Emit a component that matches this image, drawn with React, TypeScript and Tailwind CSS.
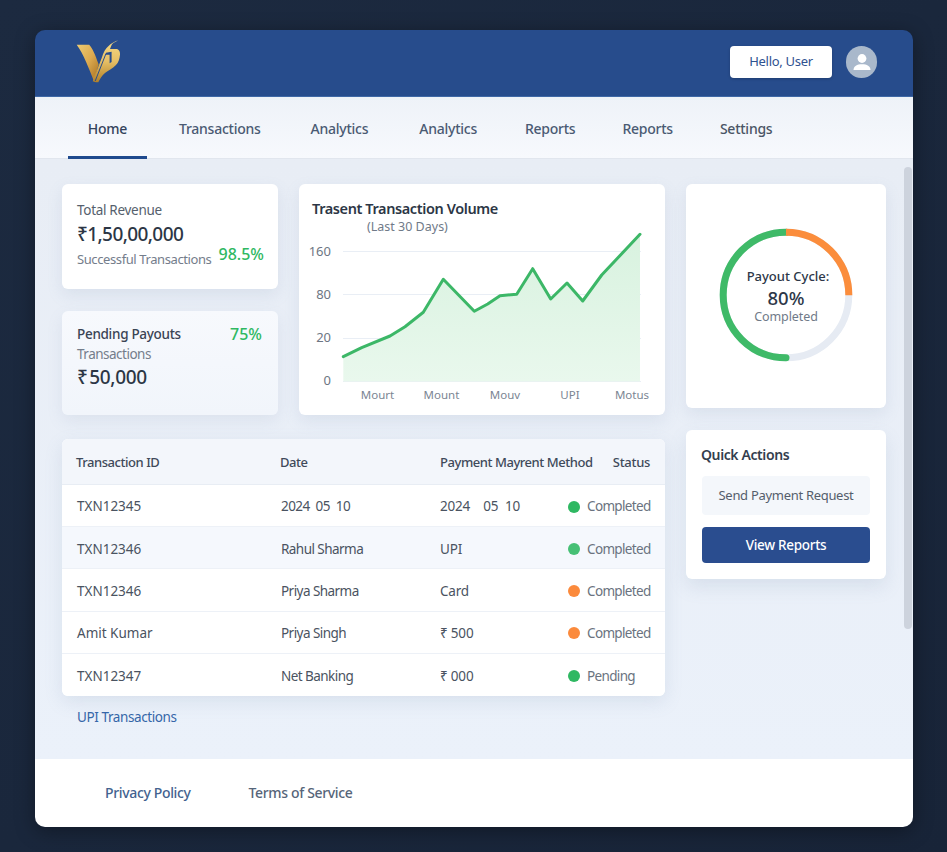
const font = { fontFamily: '"Noto Sans", "Open Sans", sans-serif' };

function Logo() {
  return (
    <svg width="50" height="46" viewBox="74 41 50 46" className="block" aria-hidden="true">
      <defs>
        <linearGradient id="gold" x1="0" y1="0" x2="1" y2="1">
          <stop offset="0" stopColor="#eecb72" />
          <stop offset="0.5" stopColor="#dcaa50" />
          <stop offset="0.8" stopColor="#bb8632" />
          <stop offset="1" stopColor="#c9994a" />
        </linearGradient>
        <linearGradient id="gold2" x1="0" y1="0" x2="0" y2="1">
          <stop offset="0" stopColor="#f4d984" />
          <stop offset="0.5" stopColor="#e6bf66" />
          <stop offset="1" stopColor="#b08029" />
        </linearGradient>
      </defs>
      <path d="M76.7 46.8H89.2C92.5 50 95.5 57.5 98.7 66.5L94 83.2C89 71 83.5 56 76.7 46.8Z" fill="url(#gold)" />
      <path d="M92.7 83.3L101.7 60C103.5 54 105.5 50.5 108.3 48.3C111 45.5 114.5 43.5 118.3 42.3C115 44 112.8 45.2 111.7 46.7L110 51H116C119 51 120.2 53.5 120 56.7C119.6 61 118.5 64.5 116 67C112.5 70.5 108 72.5 105 75C102 77.5 100 81 98.3 84.3L96 84.3Z" fill="url(#gold2)" />
      <path d="M95.2 83L106 55.5" stroke="#274c8c" strokeWidth="1" fill="none" />
      <path d="M106 54.8L111.6 53.8V64L109.6 65.2V56.8H105.6Z" fill="#274c8c" />
    </svg>
  );
}

function Chart() {
  const pts = "343.3,356.7 361.7,347.7 390,336 405,326.7 423.3,312.3 443.3,279.3 474.3,311.3 487.7,304 500,295.7 516.7,294.3 532.7,268.7 550.7,299 567,283 582.7,301 601.7,275 640,234.3";
  const labels = { fontSize: 11.5, fill: "#7b8593", fontFamily: '"Noto Sans", sans-serif' };
  const ticks = { fontSize: 13, fill: "#6d7683", fontFamily: '"Noto Sans", sans-serif' };
  return (
    <svg width="366" height="173" viewBox="299 242 366 173" className="block overflow-visible">
      <defs>
        <linearGradient id="area" x1="0" y1="0" x2="0" y2="1">
          <stop offset="0" stopColor="#d8f2df" />
          <stop offset="1" stopColor="#e9f8ed" />
        </linearGradient>
      </defs>
      {[251.5, 294.5, 338.5, 381.5].map((y) => (
        <line key={y} x1="343" x2="641" y1={y} y2={y} stroke="#e9eef5" strokeWidth="1" />
      ))}
      <polygon points={`343.3,381.5 ${pts} 640,381.5`} fill="url(#area)" />
      <polyline points={pts} fill="none" stroke="#3cb767" strokeWidth="3" strokeLinejoin="round" strokeLinecap="round" />
      <text x="331" y="256" textAnchor="end" {...ticks}>160</text>
      <text x="331" y="299" textAnchor="end" {...ticks}>80</text>
      <text x="331" y="342" textAnchor="end" {...ticks}>20</text>
      <text x="331" y="385" textAnchor="end" {...ticks}>0</text>
      <text x="377.5" y="398.5" textAnchor="middle" {...labels}>Mourt</text>
      <text x="441.5" y="398.5" textAnchor="middle" {...labels}>Mount</text>
      <text x="505" y="398.5" textAnchor="middle" {...labels}>Mouv</text>
      <text x="570" y="398.5" textAnchor="middle" {...labels}>UPI</text>
      <text x="632" y="398.5" textAnchor="middle" {...labels}>Motus</text>
    </svg>
  );
}

function Donut() {
  const r = 62.8;
  const c = 2 * Math.PI * r;
  return (
    <div className="relative w-[134px] h-[134px]">
      <svg width="134" height="134" viewBox="0 0 134 134" className="block -rotate-90">
        <circle cx="67" cy="67" r={r} fill="none" stroke="#e6ebf3" strokeWidth="7" />
        <circle cx="67" cy="67" r={r} fill="none" stroke="#3fba68" strokeWidth="7" strokeLinecap="round" strokeDasharray={`${c / 2} ${c}`} transform="rotate(180 67 67)" />
        <circle cx="67" cy="67" r={r} fill="none" stroke="#fb8d3c" strokeWidth="7" strokeDasharray={`${c / 4} ${c}`} />
      </svg>
      <div className="absolute inset-0 flex flex-col items-center justify-center pb-[1px]">
        <div className="ml-[4px] text-[13px] leading-[20px] font-medium text-[#2d3748]">Payout Cycle:</div>
        <div className="text-[18.5px] leading-[24px] font-medium text-[#2d3748]">80%</div>
        <div className="text-[12.5px] leading-[14px] tracking-[-0.1px] text-[#707a88]">Completed</div>
      </div>
    </div>
  );
}

const rows = [
  { a: "TXN12345", b: "2024  05  10", c: "2024    05  10", dot: "bg-[#2fb862]", s: "Completed", bg: "bg-white" },
  { a: "TXN12346", b: "Rahul Sharma", c: "UPI", dot: "bg-[#46c075]", s: "Completed", bg: "bg-[#f5f8fd]" },
  { a: "TXN12346", b: "Priya Sharma", c: "Card", dot: "bg-[#fb8a3c]", s: "Completed", bg: "bg-white" },
  { a: "Amit Kumar", b: "Priya Singh", c: "₹ 500", dot: "bg-[#fb8a3c]", s: "Completed", bg: "bg-white" },
  { a: "TXN12347", b: "Net Banking", c: "₹ 000", dot: "bg-[#2fb862]", s: "Pending", bg: "bg-white" },
];

const nav = [
  ["Transactions", "ml-[12px]"],
  ["Analytics", "ml-[10px]"],
  ["Analytics", "ml-[11px]"],
  ["Reports", "ml-[8px]"],
  ["Reports", "ml-[7px]"],
  ["Settings", "ml-[7px]"],
];

export default function App() {
  return (
    <div style={font} className="w-[947px] h-[852px] overflow-hidden bg-gradient-to-br from-[#1c2a40] to-[#182438] pt-[30px] pl-[35px]">
      <div className="relative w-[878px] h-[797px] rounded-[10px] overflow-hidden flex flex-col shadow-[0_4px_20px_rgba(0,0,0,0.35)]">
        <header className="h-[67px] shrink-0 bg-[#274c8c] border-b border-[#3f68a6] flex items-center pl-[39px] pr-[36px] pb-[2px]">
          <Logo />
          <div className="ml-auto flex items-center gap-[14px]">
            <div className="w-[102px] h-[32px] rounded-[4px] bg-white flex items-center justify-center text-[13px] tracking-[-0.3px] text-[#2f5290] shadow-[0_1px_3px_rgba(0,0,0,0.2)]">Hello, User</div>
            <div className="w-[31px] h-[32px] rounded-full bg-[#a9b8cb] flex items-center justify-center">
              <svg width="20" height="20" viewBox="0 0 20 20" aria-hidden="true">
                <circle cx="10" cy="6.5" r="4.4" fill="#fff" />
                <path d="M1.5 18C1.5 14 5 12.2 10 12.2C15 12.2 18.5 14 18.5 18Z" fill="#fff" />
              </svg>
            </div>
          </div>
        </header>
        <nav className="h-[62px] shrink-0 bg-gradient-to-b from-[#eef2f8] to-[#f7f9fd] border-b border-[#e1e6ee] flex pl-[33px] text-[14px] tracking-[-0.25px]">
          <div className="h-[62px] w-[79px] flex items-center justify-center font-medium text-[#34435c] border-b-[3px] border-[#1f4a8e] pt-[4px]">Home</div>
          {nav.map(([t, m], i) => (
            <div key={i} className={`px-5 h-[62px] flex items-center font-medium ${i === 5 ? "text-[#4a5566]" : "text-[#4a5a73]"} ${m}`}>{t}</div>
          ))}
        </nav>
        <main className="flex-1 min-h-0 bg-gradient-to-b from-[#e8edf5] to-[#ebf1fa] pl-[27px] pt-[25px] flex gap-[21px]">
          <div className="w-[603px]">
            <div className="flex gap-[21px]">
              <div className="w-[216px] flex flex-col gap-[22px]">
                <section className="h-[105px] rounded-[6px] bg-white shadow-[0_6px_16px_rgba(120,140,175,0.14)] pl-[15px] pr-[14px] pt-[16px]">
                  <div className="text-[13.5px] leading-[20px] tracking-[-0.3px] text-[#565f6d]">Total Revenue</div>
                  <div className="text-[19px] leading-[28px] tracking-[-0.6px] font-medium text-[#2c3645]">₹1,50,00,000</div>
                  <div className="flex items-start justify-between -mt-[6px] whitespace-nowrap">
                    <span className="mt-[7px] text-[13px] leading-[20px] tracking-[-0.4px] text-[#747d8b]">Successful Transactions</span>
                    <span className="text-[16px] leading-[24px] font-medium text-[#2fb862]">98.5%</span>
                  </div>
                </section>
                <section className="h-[104px] rounded-[6px] bg-gradient-to-b from-[#f7f9fd] to-[#f1f5fb] shadow-[0_6px_16px_rgba(120,140,175,0.12)] pl-[15px] pr-[16px] pt-[12px]">
                  <div className="flex justify-between items-center">
                    <span className="text-[13.5px] leading-[22px] tracking-[-0.3px] font-medium text-[#3a4454]">Pending Payouts</span>
                    <span className="text-[16px] leading-[22px] font-medium text-[#2fb862]">75%</span>
                  </div>
                  <div className="text-[13.5px] leading-[19px] tracking-[-0.5px] text-[#747d8b]">Transactions</div>
                  <div className="text-[19px] leading-[26px] tracking-[-0.3px] font-medium text-[#2c3645]">₹{"\u200a"}50,000</div>
                </section>
              </div>
              <section className="w-[366px] h-[231px] rounded-[6px] bg-white shadow-[0_6px_16px_rgba(120,140,175,0.14)]">
                <div className="h-[58px] pt-[14px] pl-[13px]">
                  <div className="text-[14.5px] leading-[20px] tracking-[-0.4px] font-semibold text-[#2c3645]">Trasent Transaction Volume</div>
                  <div className="pl-[55px] text-[12.5px] leading-[17px] text-[#707a88]">(Last 30 Days)</div>
                </div>
                <Chart />
              </section>
            </div>
            <section className="mt-[24px] rounded-[6px] overflow-hidden bg-white shadow-[0_6px_18px_rgba(120,140,175,0.16)]">
              <div className="h-[46px] flex items-center pl-[14px] pr-[15px] pt-[3px] bg-[#f3f6fb] border-b border-[#e8edf4] text-[13px] tracking-[-0.45px] text-[#3f4a5a] font-medium">
                <span className="w-[204px]">Transaction ID</span>
                <span className="w-[160px]">Date</span>
                <span>Payment Mayrent Method</span>
                <span className="ml-auto tracking-[-0.3px]">Status</span>
              </div>
              {rows.map((r, i) => (
                <div key={i} className={`h-[42.2px] flex items-center pl-[15px] pt-[2px] text-[13.5px] text-[#4a5361] border-b last:border-b-0 border-[#edf1f7] ${r.bg}`}>
                  <span className="w-[204px]">{r.a}</span>
                  <span className="w-[159px] whitespace-pre tracking-[-0.55px]">{r.b}</span>
                  <span className="w-[128px] whitespace-pre tracking-[-0.2px]">{r.c}</span>
                  <span className={`w-[12px] h-[12px] rounded-full ${r.dot}`} />
                  <span className="ml-[7px] tracking-[-0.65px] text-[#6a7380]">{r.s}</span>
                </div>
              ))}
            </section>
            <a className="block mt-[11px] ml-[15px] text-[13.5px] leading-[20px] tracking-[-0.4px] text-[#3566a8]">UPI Transactions</a>
          </div>
          <div className="w-[200px] flex flex-col gap-[22px]">
            <section className="h-[224px] rounded-[6px] bg-white shadow-[0_6px_16px_rgba(120,140,175,0.14)] flex items-center justify-center pb-[2px]">
              <Donut />
            </section>
            <section className="h-[149px] rounded-[6px] bg-white shadow-[0_8px_18px_rgba(120,140,175,0.16)] pt-[15px] px-[16px]">
              <div className="-ml-px text-[14px] leading-[20px] tracking-[-0.4px] font-semibold text-[#333e4e]">Quick Actions</div>
              <div className="mt-[11px] h-[39px] rounded-[4px] bg-[#f4f7fb] flex items-center justify-center text-[13px] tracking-[-0.3px] text-[#555e6c]">Send Payment Request</div>
              <div className="mt-[12px] h-[36px] rounded-[4px] bg-[#2a4d8f] flex items-center justify-center text-[13.5px] tracking-[-0.3px] font-medium text-white">View Reports</div>
            </section>
          </div>
        </main>
        <footer className="h-[68.5px] shrink-0 bg-white flex items-center pl-[70px] text-[14px] tracking-[-0.35px] font-medium">
          <a className="text-[#43628f]">Privacy Policy</a>
          <a className="ml-[58px] text-[#566579]">Terms of Service</a>
        </footer>
        <div className="absolute left-[869px] top-[137px] w-[8px] h-[462px] rounded-full bg-[#cdd3dd]" />
      </div>
    </div>
  );
}
